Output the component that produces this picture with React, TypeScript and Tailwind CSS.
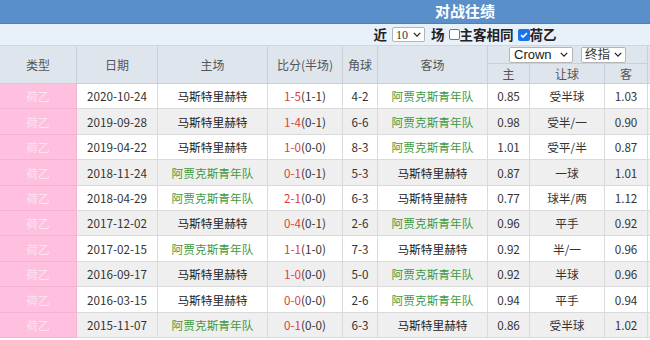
import React from 'react';

type Row = {
  date: string;
  home: string;
  score: string;
  half: string;
  corner: string;
  away: string;
  h: string;
  line: string;
  a: string;
};

const AJAX = '阿贾克斯青年队';
const MVV = '马斯特里赫特';

const rows: Row[] = [
  { date: '2020-10-24', home: MVV, score: '1-5', half: '(1-1)', corner: '4-2', away: AJAX, h: '0.85', line: '受半球', a: '1.03' },
  { date: '2019-09-28', home: MVV, score: '1-4', half: '(0-1)', corner: '6-6', away: AJAX, h: '0.98', line: '受半/一', a: '0.90' },
  { date: '2019-04-22', home: MVV, score: '1-0', half: '(0-0)', corner: '8-3', away: AJAX, h: '1.01', line: '受平/半', a: '0.87' },
  { date: '2018-11-24', home: AJAX, score: '0-1', half: '(0-1)', corner: '5-3', away: MVV, h: '0.87', line: '一球', a: '1.01' },
  { date: '2018-04-29', home: AJAX, score: '2-1', half: '(0-0)', corner: '6-3', away: MVV, h: '0.77', line: '球半/两', a: '1.12' },
  { date: '2017-12-02', home: MVV, score: '0-4', half: '(0-1)', corner: '2-6', away: AJAX, h: '0.96', line: '平手', a: '0.92' },
  { date: '2017-02-15', home: AJAX, score: '1-1', half: '(1-0)', corner: '7-3', away: MVV, h: '0.92', line: '半/一', a: '0.96' },
  { date: '2016-09-17', home: MVV, score: '1-0', half: '(0-0)', corner: '5-0', away: AJAX, h: '0.92', line: '半球', a: '0.96' },
  { date: '2016-03-15', home: MVV, score: '0-0', half: '(0-0)', corner: '2-6', away: AJAX, h: '0.94', line: '平手', a: '0.94' },
  { date: '2015-11-07', home: AJAX, score: '0-1', half: '(0-0)', corner: '6-3', away: MVV, h: '0.86', line: '受半球', a: '1.02' },
];

const cols = 'grid grid-cols-[77px_81px_110px_75px_35px_110px_42px_75px_43px_1fr]';

function Chevron({ className = '' }: { className?: string }) {
  return (
    <svg viewBox="0 0 10 6" className={className} fill="none" stroke="currentColor" strokeWidth="1.6">
      <path d="M1 1l4 4 4-4" />
    </svg>
  );
}

function Team({ name }: { name: string }) {
  return <span className={name === AJAX ? 'text-[#3f9a3f]' : 'text-[#222]'}>{name}</span>;
}

export default function App() {
  return (
    <div
      className="w-[650px] h-[340px] overflow-hidden bg-white"
      style={{ fontFamily: '"Noto Sans CJK SC", "Noto Sans", sans-serif' }}
    >
      <div className="w-[930px]">
        {/* title */}
        <div className="h-[24px] bg-[#5b8fca] border-b border-[#4f80bb] flex items-center justify-center text-white font-bold text-[15px]">
          对战往绩
        </div>

        {/* filters */}
        <div className="h-[21px] bg-[#e8f0fa] flex items-center justify-center text-[13.5px] font-bold text-[#222] leading-none">
          <span>近</span>
          <div className="ml-[5px] mr-[6px] w-[33px] h-[15px] bg-white border border-[#b5b5b5] rounded-[2px] flex items-center justify-between pl-[3px] pr-[3px] font-normal text-[12px] text-[#333]" style={{ fontFamily: '"Liberation Serif", serif' }}>
            <span>10</span>
            <Chevron className="w-[8px] h-[5px] text-[#222]" />
          </div>
          <span>场</span>
          <span className="ml-[4px] w-[11px] h-[11px] border border-[#777] bg-white rounded-[2px]" />
          <span>主客相同</span>
          <span className="ml-[4px] w-[12px] h-[12px] bg-[#1a73e8] rounded-[2px] flex items-center justify-center">
            <svg viewBox="0 0 12 12" className="w-[10px] h-[10px]" fill="none" stroke="white" strokeWidth="2">
              <path d="M2.5 6.2l2.4 2.4 4.6-5" />
            </svg>
          </span>
          <span>荷乙</span>
        </div>

        {/* header */}
        <div className={`${cols} grid-rows-[18px_20px] bg-[#dfe5ec] text-[12px] text-[#555] border-t border-[#cfd6de]`}>
          {['类型', '日期', '主场', '比分(半场)', '角球', '客场'].map((t) => (
            <div key={t} className="row-span-2 flex items-center justify-center border-r border-b border-[#c9d0d8]">
              {t}
            </div>
          ))}
          <div className="col-span-3 flex items-center justify-center gap-[8px] border-r border-b border-[#c9d0d8]">
            <div className="w-[64px] h-[16px] bg-white border border-[#b5b5b5] rounded-[2px] flex items-center justify-between px-[4px] text-[13px] text-[#222]" style={{ fontFamily: '"Liberation Sans", sans-serif' }}>
              <span>Crown</span>
              <Chevron className="w-[8px] h-[5px] text-[#222]" />
            </div>
            <div className="w-[45px] h-[16px] bg-white border border-[#b5b5b5] rounded-[2px] flex items-center justify-between px-[3px] text-[12.5px] text-[#333]">
              <span>终指</span>
              <Chevron className="w-[8px] h-[5px] text-[#222]" />
            </div>
          </div>
          <div className="row-span-2 border-b border-[#c9d0d8]" />
          <div className="flex items-center justify-center border-r border-b border-[#c9d0d8]">主</div>
          <div className="flex items-center justify-center border-r border-b border-[#c9d0d8]">让球</div>
          <div className="flex items-center justify-center border-r border-b border-[#c9d0d8]">客</div>
        </div>

        {/* rows */}
        {rows.map((r, i) => (
          <div
            key={r.date}
            className={`${cols} h-[25.4px] text-[11.7px] text-[#333] ${i % 2 === 1 ? 'bg-[#efefef]' : 'bg-white'}`}
          >
            <div className="flex items-center justify-center bg-[#ffc0df] text-[#fbe4f0] border-r border-b border-[#f4b3d3]">荷乙</div>
            <div className="flex items-center justify-center border-r border-b border-[#dadada]">{r.date}</div>
            <div className="flex items-center justify-center border-r border-b border-[#dadada]">
              <Team name={r.home} />
            </div>
            <div className="flex items-center justify-center border-r border-b border-[#dadada]">
              <span className="text-[#e23a3a]">{r.score}</span>
              <span>{r.half}</span>
            </div>
            <div className="flex items-center justify-center border-r border-b border-[#dadada]">{r.corner}</div>
            <div className="flex items-center justify-center border-r border-b border-[#dadada]">
              <Team name={r.away} />
            </div>
            <div className="flex items-center justify-center border-r border-b border-[#dadada]">{r.h}</div>
            <div className="flex items-center justify-center border-r border-b border-[#dadada]">{r.line}</div>
            <div className="flex items-center justify-center border-r border-b border-[#dadada]">{r.a}</div>
            <div className="border-b border-[#dadada]" />
          </div>
        ))}
      </div>
    </div>
  );
}
